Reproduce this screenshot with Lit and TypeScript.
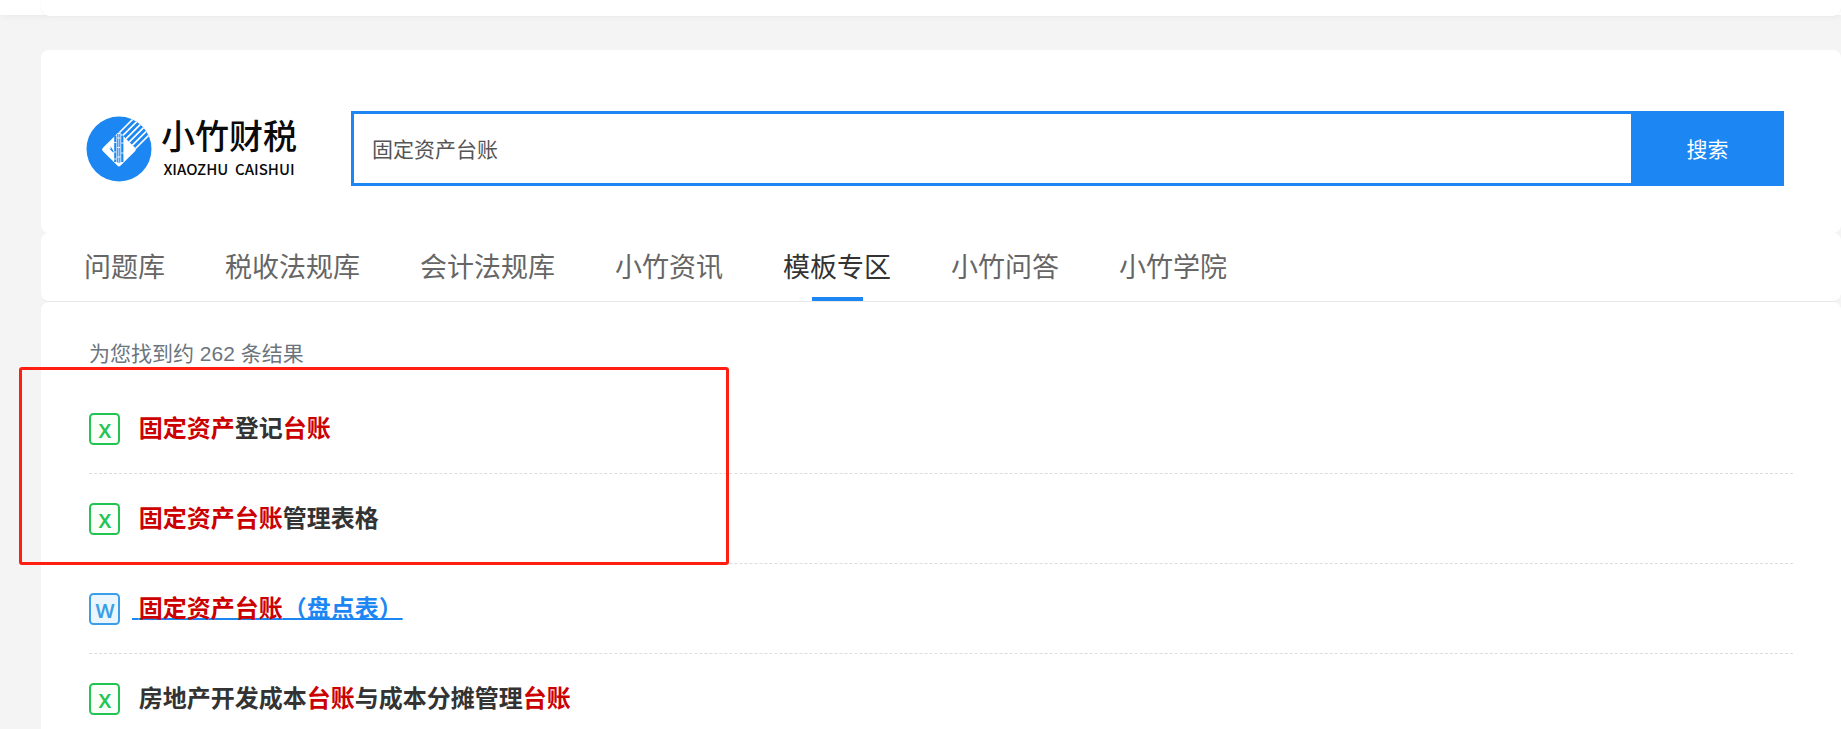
import { LitElement, html, css, svg, nothing } from "lit";
import { customElement, property, state } from "lit/decorators.js";
import { classMap } from "lit/directives/class-map.js";

const BLUE = css`#1c87f3`;

type Part = { text: string; hit?: boolean };
type Result = { kind: "x" | "w"; parts: Part[]; hovered?: boolean };

const TABS = ["问题库", "税收法规库", "会计法规库", "小竹资讯", "模板专区", "小竹问答", "小竹学院"];

const RESULTS: Result[] = [
  { kind: "x", parts: [{ text: "固定资产", hit: true }, { text: "登记" }, { text: "台账", hit: true }] },
  { kind: "x", parts: [{ text: "固定资产台账", hit: true }, { text: "管理表格" }] },
  { kind: "w", hovered: true, parts: [{ text: "固定资产台账", hit: true }, { text: "（盘点表）" }] },
  {
    kind: "x",
    parts: [
      { text: "房地产开发成本" },
      { text: "台账", hit: true },
      { text: "与成本分摊管理" },
      { text: "台账", hit: true },
    ],
  },
];

@customElement("brand-logo")
export class BrandLogo extends LitElement {
  static styles = css`
    :host {
      display: flex;
      align-items: center;
      gap: 9px;
      color: #0a0a0a;
    }
    .mark {
      display: block;
      width: 66px;
      height: 66px;
      flex: none;
    }
    .words {
      display: flex;
      flex-direction: column;
      align-items: center;
      gap: 1px;
      white-space: pre;
    }
    .name {
      font-size: 34px;
      line-height: 40px;
      font-weight: 500;
    }
    .latin {
      font-family: "Noto Sans CJK SC", sans-serif;
      font-size: 15px;
      line-height: 22px;
      font-weight: 500;
    }
  `;

  render() {
    return html`
      <svg class="mark" viewBox="0 0 66 66" aria-hidden="true">
        <defs>
          <clipPath id="disc"><circle cx="33" cy="33" r="32.5" /></clipPath>
        </defs>
        <circle cx="33" cy="33" r="32.5" fill="#1c87f3" />
        <g clip-path="url(#disc)">
          <rect x="-12.5" y="-12.5" width="25" height="25" rx="2" fill="#fff" transform="translate(33 33.5) rotate(45)" />
          <g stroke="#fff" stroke-width="1.7">
            ${[0, 1, 2, 3, 4, 5].map((i) => svg`<path d="M${33.5 + i * 3.2} ${16.5 + i * 3.2}l20 -20" />`)}
          </g>
        </g>
        <g fill="#1c87f3">
          <path d="M28.200 19.500h2.200v26.500h-2.200zM31.200 18h3.200v28.500h-3.200zM35.200 19.500h2.200v26.500h-2.200z" />
          <path d="M28 36l-3.500-6 .4 3-1.800-.4 4 4z" />
        </g>
        <path
          d="M27.500 26.500h3M27.500 36h3M27.500 43h3M31 22h3.500M31 31.500h3.500M31 41h3.500M35 27h3M35 37h3M32.800 18v28"
          stroke="#fff"
          stroke-width=".8"
        />
      </svg>
      <div class="words">
        <span class="name">小竹财税</span>
        <span class="latin">XIAOZHU  CAISHUI</span>
      </div>
    `;
  }
}

@customElement("file-icon")
export class FileIcon extends LitElement {
  @property() kind: "x" | "w" = "x";

  static styles = css`
    :host {
      display: block;
      flex: none;
    }
    svg {
      display: block;
      width: 31px;
      height: 32px;
    }
    text {
      font-family: "Noto Sans", sans-serif;
      font-size: 20px;
      font-weight: 600;
      text-anchor: middle;
    }
  `;

  render() {
    const word = this.kind === "w";
    const ink = word ? "#3a9fe8" : "#23c552";
    return html`
      <svg viewBox="0 0 31 32" aria-hidden="true">
        <rect
          x="1"
          y="1"
          width="29"
          height="30"
          rx="3.5"
          stroke=${ink}
          stroke-width="2"
          fill=${word ? "#eaf5fd" : "#fafffa"}
        />
        <text x="16" y="25" fill=${ink}>${word ? "W" : "X"}</text>
      </svg>
    `;
  }
}

@customElement("app-root")
export class AppRoot extends LitElement {
  @state() private active = 4;
  @state() private query = "固定资产台账";

  static styles = css`
    :host {
      display: block;
      position: relative;
      height: 100vh;
      overflow: hidden;
      background: #f4f4f4;
      font-family: "Liberation Sans", "Noto Sans CJK SC", sans-serif;
      color: #333;
    }
    * {
      box-sizing: border-box;
    }
    .topbar {
      height: 15px;
      background: #fff;
      box-shadow: 0 1px 8px rgba(0, 0, 0, 0.05);
    }
    .topbar-panel {
      height: 16px;
      margin-left: 41px;
      background: #fff;
      border-radius: 0 0 8px 8px;
      box-shadow: 0 0 1px rgba(0, 0, 0, 0.12);
    }
    main {
      margin: 35px 0 0 41px;
    }
    .card {
      background: #fff;
      border-radius: 8px;
    }
    .search-card {
      display: flex;
      align-items: center;
      gap: 54px;
      height: 183px;
      padding: 14px 57px 0 45px;
    }
    .search {
      display: flex;
      flex: 1;
      height: 75px;
    }
    .search input {
      flex: 1;
      min-width: 0;
      margin: 0;
      padding: 0 18px 2px;
      border: 3px solid ${BLUE};
      border-right: 0;
      border-radius: 0;
      outline: 0;
      background: #fff;
      font: inherit;
      font-size: 21px;
      color: #555;
    }
    .search button {
      width: 153px;
      border: 0;
      padding: 0 0 2px;
      background: ${BLUE};
      color: #fff;
      font: inherit;
      font-size: 21px;
      cursor: pointer;
    }
    .tabs {
      display: flex;
      gap: 60px;
      height: 69px;
      padding: 0 43px;
      border-bottom: 1px solid #e8e8e8;
    }
    .tab {
      display: grid;
      grid-template-rows: 64px 4px;
      justify-items: center;
      color: #666;
      font-size: 27px;
      line-height: 70px;
      text-decoration: none;
      white-space: nowrap;
    }
    .tab.active {
      color: #333;
    }
    .tab.active::after {
      content: "";
      width: 51px;
      background: ${BLUE};
    }
    .results {
      padding: 36px 48px 0;
    }
    .count {
      margin: 0;
      font-size: 21px;
      line-height: 32px;
      color: #6c757d;
    }
    ul {
      list-style: none;
      margin: 14px 0 0;
      padding: 0;
    }
    li {
      display: flex;
      align-items: center;
      gap: 12px;
      height: 90px;
      border-bottom: 1px dashed #ddd;
    }
    .title {
      font-size: 24px;
      line-height: 36px;
      font-weight: 700;
      color: #333;
      text-decoration: none;
    }
    .title.hovered,
    .title:hover {
      color: ${BLUE};
      text-decoration: underline;
      text-decoration-thickness: 2px;
      text-decoration-skip-ink: none;
    }
    .hit {
      color: #c00;
    }
    .callout {
      position: absolute;
      left: 19px;
      top: 367px;
      width: 710px;
      height: 198px;
      border: 3px solid #ff1e10;
      border-radius: 3px;
      pointer-events: none;
    }
  `;

  private pick(e: Event, i: number) {
    e.preventDefault();
    this.active = i;
  }

  render() {
    return html`
      <header class="topbar"><div class="topbar-panel"></div></header>
      <main>
        <section class="card search-card">
          <brand-logo></brand-logo>
          <form class="search" @submit=${(e: Event) => e.preventDefault()}>
            <input
              type="text"
              aria-label="搜索"
              .value=${this.query}
              @input=${(e: Event) => (this.query = (e.target as HTMLInputElement).value)}
            />
            <button type="submit">搜索</button>
          </form>
        </section>
        <nav class="card tabs">
          ${TABS.map(
            (t, i) => html`<a
              href="#"
              class=${classMap({ tab: true, active: i === this.active })}
              aria-current=${i === this.active ? "page" : nothing}
              @click=${(e: Event) => this.pick(e, i)}
              >${t}</a
            >`,
          )}
        </nav>
        <section class="card results">
          <p class="count">为您找到约 262 条结果</p>
          <ul>
            ${RESULTS.map(
              (r) => html`<li>
                <file-icon .kind=${r.kind}></file-icon>
                <a href="#" class=${classMap({ title: true, hovered: !!r.hovered })}
                  >&nbsp;${r.parts.map((p) => (p.hit ? html`<span class="hit">${p.text}</span>` : p.text))}</a
                >
              </li>`,
            )}
          </ul>
        </section>
      </main>
      <div class="callout"></div>
    `;
  }
}
